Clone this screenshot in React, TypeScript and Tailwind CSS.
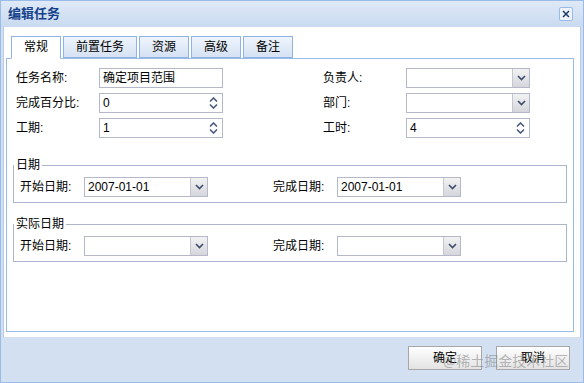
import React from "react";

function Chevron() {
  return (
    <svg width="9" height="6" viewBox="0 0 9 6">
      <path d="M1 1l3.5 3.5L8 1" fill="none" stroke="#3e4c6b" strokeWidth="1.6" />
    </svg>
  );
}

function Spin() {
  return (
    <svg width="9" height="12" viewBox="0 0 9 12">
      <path d="M1 4.5l3.5-3.5L8 4.5" fill="none" stroke="#4a5a7c" strokeWidth="1.6" />
      <path d="M1 7.5l3.5 3.5L8 7.5" fill="none" stroke="#4a5a7c" strokeWidth="1.6" />
    </svg>
  );
}

function Combo({ value = "" }: { value?: string }) {
  return (
    <div className="w-[124px] h-[20px] border border-[#b5b8c8] bg-white flex items-stretch">
      <span className="flex-1 pl-[3px] text-[12px] leading-[18px]">{value}</span>
      <div className="w-[17px] bg-gradient-to-b from-[#f2f2f2] to-[#d4d6dc] border-l border-[#c4c6d0] flex items-center justify-center">
        <Chevron />
      </div>
    </div>
  );
}

function Spinner({ value }: { value: string }) {
  return (
    <div className="w-[124px] h-[20px] border border-[#b5b8c8] bg-white flex items-center">
      <span className="flex-1 pl-[3px] text-[12px] leading-[18px]">{value}</span>
      <div className="w-[17px] flex items-center justify-center">
        <Spin />
      </div>
    </div>
  );
}

function TextBox({ value }: { value: string }) {
  return (
    <div className="w-[124px] h-[20px] border border-[#b5b8c8] bg-white flex items-center">
      <span className="pl-[3px] text-[12px] leading-[18px]">{value}</span>
    </div>
  );
}

function Field({ label, children }: { label: string; children: React.ReactNode }) {
  return (
    <div className="flex items-center">
      <span className="w-[83px] text-[12px] leading-[16px]">{label}</span>
      {children}
    </div>
  );
}

function DateGroup({ title, start, end }: { title: string; start?: string; end?: string }) {
  return (
    <fieldset className="w-[554px] min-w-0 ml-[6px] border border-[#a9b7c8] px-[6px] pt-[4px] pb-[5px]">
      <legend className="text-[12px] leading-[16px] px-[2px] -ml-[6px]">{title}</legend>
      <div className="flex items-center">
        <span className="w-[64px] text-[12px] leading-[16px]">开始日期:</span>
        <Combo value={start} />
        <span className="ml-[65px] w-[64px] text-[12px] leading-[16px]">完成日期:</span>
        <Combo value={end} />
      </div>
    </fieldset>
  );
}

const tabs = ["常规", "前置任务", "资源", "高级", "备注"];

export default function App() {
  return (
    <div className="w-[584px] h-[383px] bg-[#d2e0f2] border border-[#99bbe8] flex flex-col font-['Liberation_Sans','Noto_Sans_CJK_SC',sans-serif] text-black relative overflow-hidden">
      <div className="h-[26px] shrink-0 bg-gradient-to-b from-[#dfe9f7] to-[#c9daf0] flex items-center justify-between pl-[7px] pr-[10px]">
        <span className="text-[13px] font-bold text-[#15428b] leading-[16px]">编辑任务</span>
        <div className="w-[14px] h-[14px] border border-[#99bbe8] rounded-[2px] bg-[#eef3fb] flex items-center justify-center">
          <svg width="10" height="10" viewBox="0 0 10 10">
            <path d="M2 2l6 6M8 2l-6 6" stroke="#1f3a66" strokeWidth="1.5" />
          </svg>
        </div>
      </div>
      <div className="mx-[2px] bg-white pl-[2px] pt-[9px] pb-[5px] border-x border-[#b5cbe8]">
        <div className="flex gap-[2px] pl-[5px] items-end">
          {tabs.map((t, i) => (
            <div
              key={t}
              className={
                i === 0
                  ? "h-[23px] px-[12px] border border-[#8db2e3] border-b-white bg-white text-[12px] leading-[20px] -mb-px relative z-10"
                  : "h-[22px] px-[12px] border border-[#8db2e3] bg-gradient-to-b from-[#eef4fc] to-[#d5e2f3] text-[12px] leading-[20px]"
              }
            >
              {t}
            </div>
          ))}
        </div>
        <div className="w-[568px] h-[274px] border border-[#99bbe8] pt-[9px]">
          <div className="flex pl-[9px]">
            <div className="flex flex-col gap-[5px] w-[307px]">
              <Field label="任务名称:">
                <TextBox value="确定项目范围" />
              </Field>
              <Field label="完成百分比:">
                <Spinner value="0" />
              </Field>
              <Field label="工期:">
                <Spinner value="1" />
              </Field>
            </div>
            <div className="flex flex-col gap-[5px]">
              <Field label="负责人:">
                <Combo />
              </Field>
              <Field label="部门:">
                <Combo />
              </Field>
              <Field label="工时:">
                <Spinner value="4" />
              </Field>
            </div>
          </div>
          <div className="mt-[19px] space-y-[13px]">
            <DateGroup title="日期" start="2007-01-01" end="2007-01-01" />
            <DateGroup title="实际日期" />
          </div>
        </div>
      </div>
      <div className="flex-1 flex justify-end items-start pt-[9px] pr-[13px] gap-[14px]">
        <button className="w-[74px] h-[24px] border border-[#a7a7a7] bg-gradient-to-b from-white to-[#e3e3e3] text-[12px] leading-[20px]">确定</button>
        <button className="w-[74px] h-[24px] border border-[#a7a7a7] bg-gradient-to-b from-white to-[#e3e3e3] text-[12px] leading-[20px]">取消</button>
      </div>
      <span className="absolute left-[442px] top-[350px] text-[14px] leading-[18px] text-[#8a8a8a]/60 font-['Noto_Sans_CJK_SC',sans-serif]">@稀土掘金技术社区</span>
    </div>
  );
}
